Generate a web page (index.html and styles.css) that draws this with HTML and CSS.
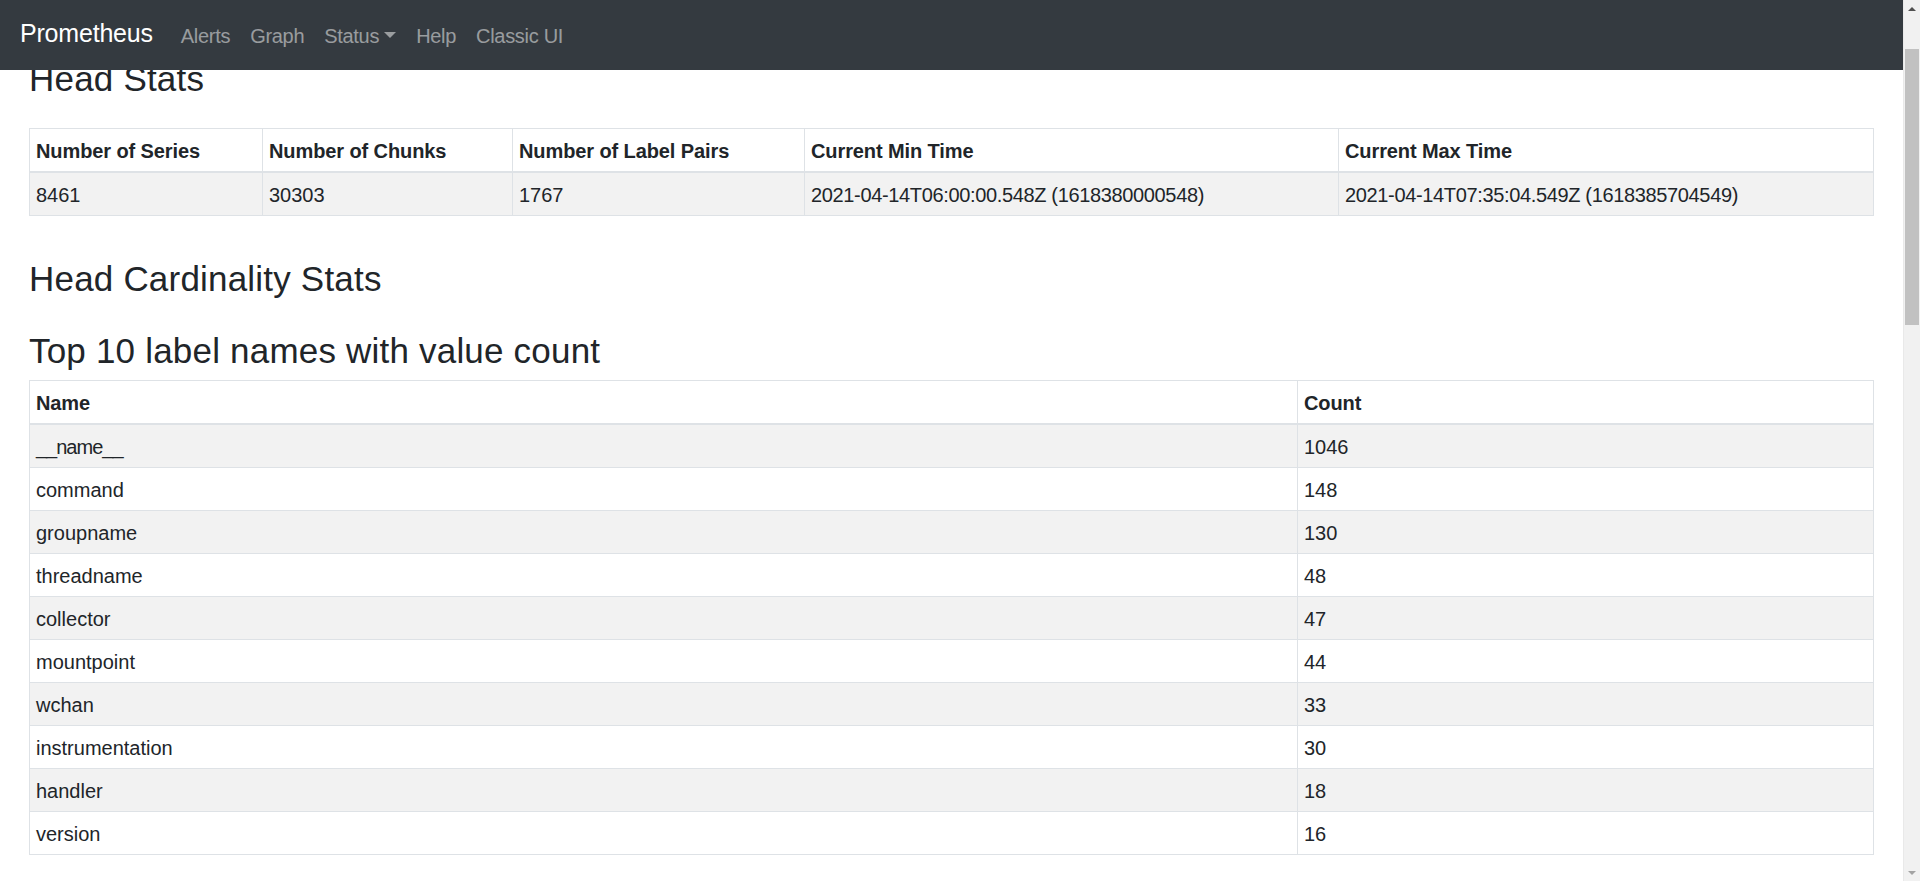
FILE: index.html
```html
<!DOCTYPE html>
<html lang="en">
<head>
<meta charset="utf-8">
<title>Prometheus Time Series Collection and Processing Server</title>
<link rel="stylesheet" href="styles.css">
</head>
<body>
<div class="viewport">
  <div class="page">
    <nav class="navbar">
      <a class="brand" href="#">Prometheus</a>
      <ul class="nav">
        <li><a class="nav-link" href="#">Alerts</a></li>
        <li><a class="nav-link" href="#">Graph</a></li>
        <li><a class="nav-link" href="#">Status<span class="caret"></span></a></li>
        <li><a class="nav-link" href="#">Help</a></li>
        <li><a class="nav-link" href="#">Classic UI</a></li>
      </ul>
    </nav>
    <main class="content">
      <h3 class="heading">Head Stats</h3>
      <div class="table-wrap">
        <table class="table">
          <colgroup>
            <col class="c-series"><col class="c-chunks"><col class="c-pairs"><col class="c-min"><col class="c-max">
          </colgroup>
          <thead>
            <tr>
              <th>Number of Series</th>
              <th>Number of Chunks</th>
              <th>Number of Label Pairs</th>
              <th>Current Min Time</th>
              <th>Current Max Time</th>
            </tr>
          </thead>
          <tbody>
            <tr>
              <td>8461</td>
              <td>30303</td>
              <td>1767</td>
              <td class="time">2021-04-14T06:00:00.548Z (1618380000548)</td>
              <td class="time">2021-04-14T07:35:04.549Z (1618385704549)</td>
            </tr>
          </tbody>
        </table>
      </div>
      <h3 class="heading">Head Cardinality Stats</h3>
      <h3 class="heading heading--flush">Top 10 label names with value count</h3>
      <table class="table table--flush">
        <colgroup>
          <col class="c-name"><col class="c-count">
        </colgroup>
        <thead>
          <tr><th>Name</th><th>Count</th></tr>
        </thead>
        <tbody>
          <tr><td class="under">__name__</td><td>1046</td></tr>
          <tr><td>command</td><td>148</td></tr>
          <tr><td>groupname</td><td>130</td></tr>
          <tr><td>threadname</td><td>48</td></tr>
          <tr><td>collector</td><td>47</td></tr>
          <tr><td>mountpoint</td><td>44</td></tr>
          <tr><td>wchan</td><td>33</td></tr>
          <tr><td>instrumentation</td><td>30</td></tr>
          <tr><td>handler</td><td>18</td></tr>
          <tr><td>version</td><td>16</td></tr>
        </tbody>
      </table>
    </main>
  </div>
  <div class="scrollbar">
    <div class="sb-btn"><span class="sb-arrow sb-arrow--up"></span></div>
    <div class="sb-track">
      <div class="sb-thumb"></div>
    </div>
    <div class="sb-btn"><span class="sb-arrow sb-arrow--down"></span></div>
  </div>
</div>
</body>
</html>
```

FILE: styles.css
```css
* {
  box-sizing: border-box;
}

html, body {
  margin: 0;
  padding: 0;
  height: 100%;
  overflow: hidden;
}

body {
  font-family: "Liberation Sans", Arial, sans-serif;
  font-size: 20px;
  line-height: 30px;
  color: #212529;
  background: #fff;
}

.viewport {
  display: flex;
  height: 881px;
  width: 1920px;
}

.page {
  position: relative;
  flex: 1;
  min-width: 0;
  height: 100%;
  overflow: hidden;
}

/* fixed-top navbar lying over the scrolled content */
.navbar {
  position: absolute;
  top: 0;
  left: 0;
  right: 0;
  z-index: 10;
  height: 70px;
  background: #343a40;
  display: flex;
  align-items: center;
  padding: 0 20px;
}

.brand {
  font-size: 25px;
  line-height: 37px;
  letter-spacing: -0.2px;
  color: #fff;
  text-decoration: none;
  margin-right: 18px;
  margin-bottom: 4px;
  white-space: nowrap;
}

.nav {
  display: flex;
  list-style: none;
  margin: 0;
  padding: 0;
}

.nav-link {
  display: block;
  padding: 11px 10px 9px;
  line-height: 30px;
  letter-spacing: -0.3px;
  color: rgba(255, 255, 255, 0.5);
  text-decoration: none;
  white-space: nowrap;
}

.caret {
  display: inline-block;
  margin-left: 5px;
  vertical-align: 5px;
  border-top: 6px solid;
  border-left: 6px solid transparent;
  border-right: 6px solid transparent;
}

.content {
  padding: 46px 19px 0;
}

.heading {
  margin: 0 0 10px;
  padding: 12px 10px 8px;
  font-size: 35px;
  line-height: 42px;
  font-weight: 500;
  letter-spacing: 0.2px;
}

.heading--flush {
  margin-bottom: 0;
}

.table-wrap {
  padding: 10px;
}

.table {
  width: 100%;
  border-collapse: collapse;
  margin-bottom: 20px;
  border: 1px solid #dee2e6;
  table-layout: fixed;
}

.table--flush {
  width: calc(100% - 20px);
  margin-left: 10px;
}

.table th,
.table td {
  text-align: left;
  vertical-align: top;
  border: 1px solid #dee2e6;
  padding: 7px 6px 5px;
  white-space: nowrap;
}

.table th {
  font-weight: 700;
  border-bottom-width: 2px;
  letter-spacing: -0.1px;
}

.table td.time {
  letter-spacing: -0.35px;
}

.table td.under {
  letter-spacing: -1px;
}

.table tbody tr:nth-of-type(odd) {
  background: #f2f2f2;
}

.c-series { width: 233px; }
.c-chunks { width: 250px; }
.c-pairs  { width: 292px; }
.c-min    { width: 534px; }
.c-max    { width: 535px; }

.c-name  { width: 1268px; }
.c-count { width: 576px; }

/* window scrollbar */
.scrollbar {
  width: 17px;
  flex: none;
  display: flex;
  flex-direction: column;
  background: #f1f1f1;
  border-left: 1px solid #e9e9e9;
}

.sb-btn {
  height: 17px;
  display: flex;
  align-items: center;
  justify-content: center;
}

.sb-arrow {
  width: 0;
  height: 0;
  border-left: 4px solid transparent;
  border-right: 4px solid transparent;
}

.sb-arrow--up {
  border-bottom: 4px solid #505050;
}

.sb-arrow--down {
  border-top: 4px solid #a3a3a3;
}

.sb-track {
  flex: 1;
  padding: 32px 1px 0;
}

.sb-thumb {
  height: 276px;
  background: #c1c1c1;
}
```
